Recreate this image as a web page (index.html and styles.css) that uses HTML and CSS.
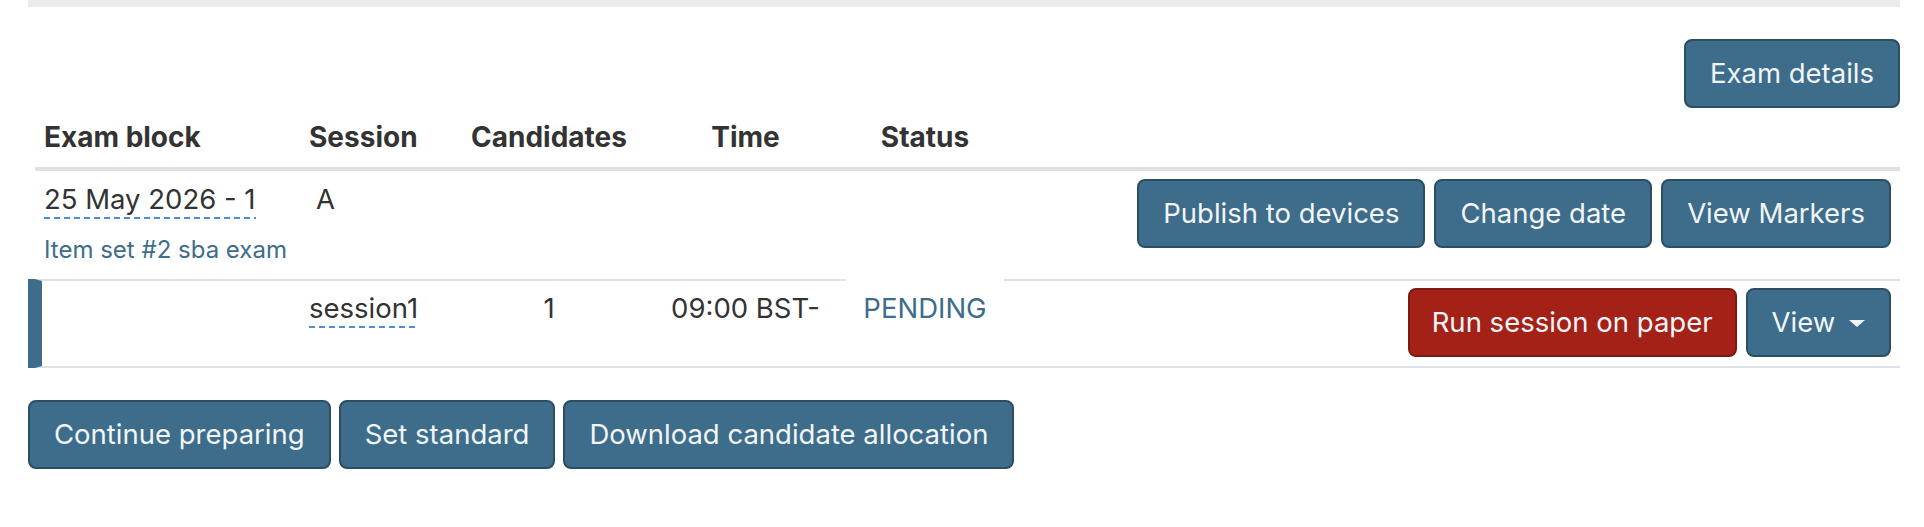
FILE: index.html
```html
<!DOCTYPE html>
<html>
<head>
  <title>Exam sessions</title>
  <link rel="stylesheet" href="styles.css">
</head>
<body>
  <div class="page">
    <div class="topbar"></div>

    <div class="toolbar">
      <button class="btn">Exam details</button>
    </div>

    <table class="exam-table">
      <colgroup>
        <col class="c-block">
        <col class="c-session">
        <col class="c-cands">
        <col class="c-time">
        <col class="c-status">
        <col class="c-actions">
      </colgroup>
      <thead>
        <tr>
          <th>Exam block</th>
          <th>Session</th>
          <th class="center">Candidates</th>
          <th class="center">Time</th>
          <th class="center">Status</th>
          <th></th>
        </tr>
      </thead>
      <tbody>
        <tr class="block-row">
          <td>
            <span class="dotted">25 May 2026 - 1</span>
            <a class="item-set" href="#">Item set #2 sba exam</a>
          </td>
          <td class="letter">A</td>
          <td></td>
          <td></td>
          <td></td>
          <td>
            <div class="actions">
              <button class="btn">Publish to devices</button>
              <button class="btn">Change date</button>
              <button class="btn">View Markers</button>
            </div>
          </td>
        </tr>
        <tr class="session-row">
          <td class="marker"></td>
          <td><span class="dotted">session1</span></td>
          <td class="center">1</td>
          <td class="center">09:00 BST-</td>
          <td class="center status no-top">PENDING</td>
          <td>
            <div class="actions">
              <button class="btn btn-danger">Run session on paper</button>
              <button class="btn">View <span class="caret"></span></button>
            </div>
          </td>
        </tr>
      </tbody>
    </table>

    <div class="footer-actions">
      <button class="btn">Continue preparing</button>
      <button class="btn">Set standard</button>
      <button class="btn">Download candidate allocation</button>
    </div>
  </div>
</body>
</html>
```

FILE: styles.css
```css
body {
  margin: 0;
  font-family: Inter, "Noto Sans", sans-serif;
  font-size: 27.5px;
  line-height: 40px;
  color: #333;
  background: #fff;
}
.page {
  padding: 0 24px 0 28px;
}
.topbar {
  height: 7px;
  background-color: #ebebeb;
}
.toolbar {
  display: flex;
  justify-content: flex-end;
  margin-top: 32px;
}
.btn {
  font-family: inherit;
  font-size: 27.5px;
  line-height: 41px;
  color: #f2f5f8;
  background-color: #3d6d8a;
  border: 2px solid #2b4e63;
  border-radius: 8px;
  padding: 12px 24px;
  cursor: pointer;
  white-space: nowrap;
}
.btn-danger {
  background-color: #a32117;
  border-color: #7c1910;
  padding: 12px 22px;
}
.caret {
  display: inline-block;
  margin-left: 6px;
  vertical-align: 5px;
  border-top: 7px solid #f2f5f8;
  border-left: 8px solid transparent;
  border-right: 8px solid transparent;
}

/* sessions table */
.exam-table {
  width: calc(100% - 7px);
  margin-left: 7px;
  table-layout: fixed;
  border-collapse: separate;
  border-spacing: 0;
}
.c-block { width: 265px; }
.c-session { width: 153px; }
.c-cands { width: 192px; }
.c-time { width: 201px; }
.c-status { width: 158px; }
.exam-table th {
  text-align: left;
  font-size: 28px;
  font-weight: 700;
  padding: 9px 9px 10px;
  border-bottom: 4px solid #dee2e6;
}
.exam-table td {
  vertical-align: top;
  padding: 8px 9px 12px;
}
.exam-table .center {
  text-align: center;
}
.letter {
  padding-left: 16px !important;
}
.dotted {
  padding-bottom: 3px;
  background-image: linear-gradient(to right, #4a8fd4 65%, transparent 65%);
  background-size: 10px 2px;
  background-repeat: repeat-x;
  background-position: left bottom;
}
.item-set {
  display: block;
  margin-top: 14px;
  font-size: 24px;
  line-height: 34px;
  color: #3d6d8a;
  text-decoration: none;
}
.actions {
  display: flex;
  justify-content: flex-end;
  gap: 9px;
}
.session-row td {
  padding: 7px 9px 9px;
  border-top: 2px solid #dee2e6;
  border-bottom: 2px solid #dee2e6;
}
.session-row td.no-top {
  border-top-color: #fff;
}
.session-row td.marker {
  border-left: 7px solid #3d6d8a;
  box-shadow: -7px 0 0 #3d6d8a;
}
.status {
  color: #3d6d8a;
}
.footer-actions {
  display: flex;
  gap: 8px;
  margin-top: 32px;
}
```
